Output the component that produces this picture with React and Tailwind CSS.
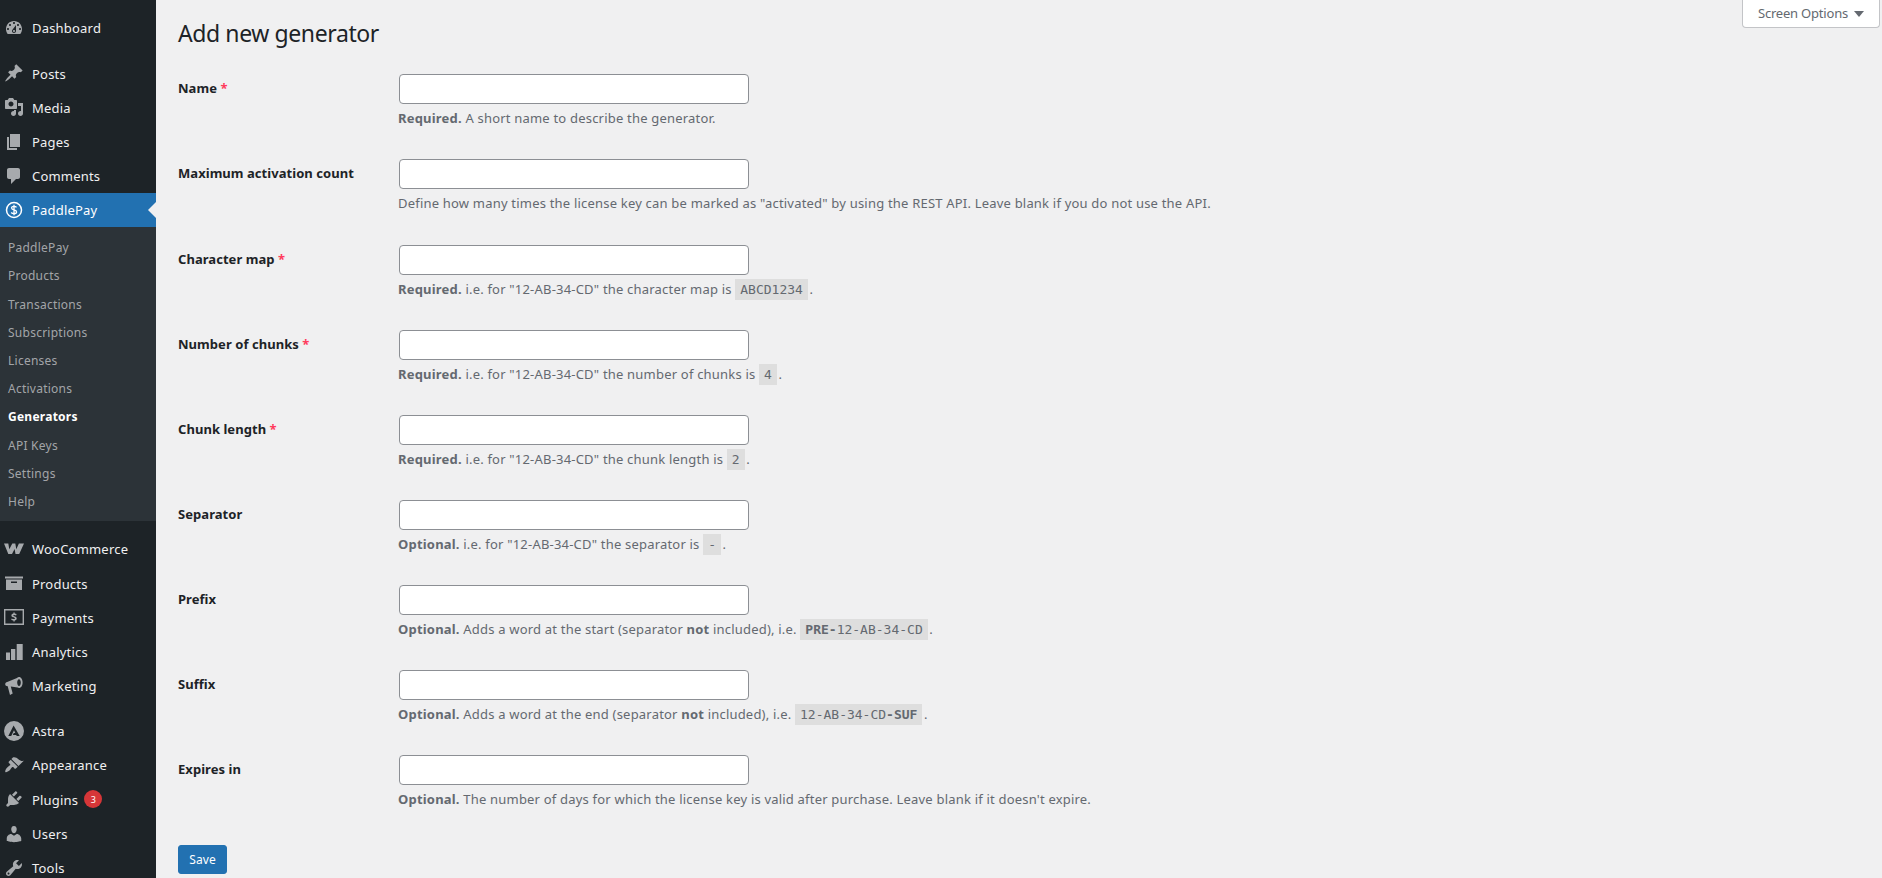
import React from 'react';

const FONT = "font-['Noto_Sans',sans-serif]";

// Dashicons-style glyphs, all on a 20x20 box
const Icon = ({ children }) => (
  <svg viewBox="0 0 20 20" className="w-5 h-5 shrink-0 fill-[#a7aaad]" fillRule="evenodd">
    {children}
  </svg>
);

const icons = {
  dashboard: <path d="M3.76 16h12.48c1.1-1.37 1.76-3.11 1.76-5 0-4.42-3.58-8-8-8s-8 3.58-8 8c0 1.89.66 3.63 1.76 5zM10 4c.55 0 1 .45 1 1s-.45 1-1 1-1-.45-1-1 .45-1 1-1zM6 6c.55 0 1 .45 1 1s-.45 1-1 1-1-.45-1-1 .45-1 1-1zm8 0c.55 0 1 .45 1 1s-.45 1-1 1-1-.45-1-1 .45-1 1-1zm-5.37 5.55L12 7v6c0 1.1-.9 2-2 2s-2-.9-2-2c0-.57.24-1.08.63-1.45zM4 10c.55 0 1 .45 1 1s-.45 1-1 1-1-.45-1-1 .45-1 1-1zm12 0c.55 0 1 .45 1 1s-.45 1-1 1-1-.45-1-1 .45-1 1-1zm-5 3c0-.55-.45-1-1-1s-1 .45-1 1 .45 1 1 1 1-.45 1-1z" />,
  posts: <path d="M10.44 3.02l1.82-1.82 6.36 6.35-1.83 1.82c-1.05-.68-2.48-.57-3.41.36l-.75.75c-.92.93-1.04 2.35-.35 3.41l-1.83 1.82-2.41-2.41-2.8 2.79c-.42.42-3.38 2.71-3.8 2.29s1.86-3.39 2.28-3.81l2.79-2.79L4.1 9.36l1.83-1.82c1.05.69 2.48.57 3.4-.36l.75-.75c.93-.92 1.05-2.35.36-3.41z" />,
  media: <path d="M13 11V4c0-.55-.45-1-1-1h-1.67L9 1H5L3.67 3H2c-.55 0-1 .45-1 1v7c0 .55.45 1 1 1h10c.55 0 1-.45 1-1zM7 4.5c1.38 0 2.5 1.12 2.5 2.5S8.38 9.5 7 9.5 4.5 8.38 4.5 7 5.62 4.5 7 4.5zM14 6h5v10.5c0 1.38-1.12 2.5-2.5 2.5S14 17.88 14 16.5s1.12-2.5 2.5-2.5c.17 0 .34.02.5.05V9h-3V6zm-4 8.05V13h2v3.5c0 1.38-1.12 2.5-2.5 2.5S7 17.88 7 16.5 8.12 14 9.5 14c.17 0 .34.02.5.05z" />,
  pages: <path d="M6 15V2h10v13H6zm-1 1h8v2H3V5h2v11z" />,
  comments: <path d="M5 2h9c1.1 0 2 .9 2 2v7c0 1.1-.9 2-2 2h-2l-5 5v-5H5c-1.1 0-2-.9-2-2V4c0-1.1.9-2 2-2z" />,
  woo: <path d="M0 4.500h4.300l1 5.800 3-5.800h3l1 5.800 2.600-5.800H20l-4.800 10.500h-3.700l-.9-5-2.600 5H4.300z" />,
  products: <path d="M1 3.500h18v2H1zM2 6.500h16V17H2zM7 8.500V10h6V8.500z" />,
  payments: <path d="M0 2h20v16H0zM1.400 3.400v13.200h17.200V3.400zM10.700 5.400v1c.8.1 1.400.3 1.900.6l-.5 1.400c-.6-.3-1.300-.5-2-.5-.6 0-.9.2-.9.6 0 .9 3.500.6 3.500 2.900 0 1-.7 1.800-2 2v1.100H9.400v-1c-.9-.1-1.700-.3-2.200-.7l.5-1.400c.6.4 1.500.6 2.200.6.7 0 1-.2 1-.6 0-.9-3.500-.6-3.500-2.800 0-1 .7-1.800 2-2v-1z" />,
  analytics: <g><rect x="2" y="10.500" width="4" height="7.500" /><rect x="7" y="7" width="4.300" height="11" /><rect x="12.700" y="2" width="6" height="16" /></g>,
  marketing: <path d="M15 1c2.200 0 3.600 2.500 3.600 5.500S17.200 12 15 12c-.5 0-1-.1-1.400-.4L6.800 10.600 8.700 17.600 6 19 3.700 10.300C2.200 10 1.200 9.400 1.200 8.200c0-1 .8-1.700 2-2.100L13 1.900c.6-.4 1.300-.9 2-.9zM15 3.200c-1 0-1.800 1.500-1.800 3.300S14 10 15 10s1.800-1.700 1.800-3.500S16 3.200 15 3.200z" />,
  astra: <path d="M10 0a10 10 0 1 1 0 20 10 10 0 0 1 0-20zM9.600 4.500 4.300 15h2.900l2.800-5.800 1.300 2.800H9.800l-1 2h3.400l.5 1h3z" />,
  appearance: <path d="M14.480 11.060 7.410 3.990l1.500-1.500c.5-.56 2.300-.47 3.510.32 1.210.8 1.430 1.280 2.910 2.100 1.180.64 2.450 1.260 4.450.85zM13.770 11.770 6.700 4.700 4.930 6.470c-.39.39-.39 1.020 0 1.410l1.060 1.060c.39.39.39 1.030 0 1.420-.6.6-1.430 1.110-2.210 1.690-.35.26-.7.53-1.010.84-1.100 1.100-2 3.500-1.400 4.100.6.6 3-.3 4.100-1.400.31-.31.58-.66.84-1.010.58-.78 1.090-1.610 1.690-2.210.39-.39 1.030-.39 1.420 0l1.060 1.060c.39.39 1.020.39 1.410 0z" />,
  plugins: <path d="M13.110 4.360 9.870 7.600 8 5.730l3.240-3.240c.35-.34 1.050-.2 1.560.32.52.51.66 1.210.31 1.550zm-8 1.770.91-1.120 9.010 9.010-1.190.84c-.71.71-2.630 1.160-3.820 1.160H6.140L4.900 17.260c-.59.59-1.540.59-2.120 0-.59-.58-.59-1.530 0-2.120l1.240-1.240v-3.880c0-1.130.4-3.190 1.090-3.890zm7.260 3.970 3.240-3.240c.34-.35 1.040-.21 1.550.31.52.51.66 1.210.31 1.550l-3.240 3.250z" />,
  users: <path d="M10 9.250c-2.270 0-2.730-3.440-2.730-3.440C7 4.020 7.820 2 9.970 2c2.160 0 2.980 2.020 2.710 3.810 0 0-.41 3.440-2.680 3.440zm0 2.570L12.720 10c2.390 0 4.520 2.330 4.520 4.530v2.490s-3.650 1.130-7.240 1.130c-3.650 0-7.240-1.130-7.240-1.130v-2.490c0-2.250 1.940-4.480 4.470-4.480z" />,
  tools: <path d="M16.680 9.770c-1.340 1.340-3.300 1.670-4.950.99l-5.410 6.520c-.99.99-2.590.99-3.580 0s-.99-2.590 0-3.570l6.520-5.420c-.68-1.650-.35-3.610.99-4.950 1.280-1.280 3.120-1.620 4.720-1.060l-2.890 2.890 2.820 2.820 2.860-2.870c.53 1.580.18 3.390-1.080 4.650zM3.810 16.210c.4.39 1.040.39 1.430 0 .4-.4.4-1.040 0-1.430-.39-.4-1.030-.4-1.430 0-.39.39-.39 1.030 0 1.430z" />,
};

const MenuItem = ({ icon, label, badge }) => (
  <div className="flex items-center h-[34.2px] pl-1 text-[13px] text-[#f0f0f1]">
    <Icon>{icons[icon]}</Icon>
    <span className="ml-2 mt-[2px] tracking-[0.2px]">{label}</span>
    {badge && (
      <span className="ml-[6px] w-[18px] h-[18px] rounded-full bg-[#d63638] text-white text-[9px] flex items-center justify-center">{badge}</span>
    )}
  </div>
);

const subItems = ['PaddlePay', 'Products', 'Transactions', 'Subscriptions', 'Licenses', 'Activations', 'Generators', 'API Keys', 'Settings', 'Help'];

const Sidebar = () => (
  <div className="w-[156px] shrink-0 bg-[#1d2327] pt-[11px] h-full overflow-hidden">
    <MenuItem icon="dashboard" label="Dashboard" />
    <div className="h-[11px]" />
    <MenuItem icon="posts" label="Posts" />
    <MenuItem icon="media" label="Media" />
    <MenuItem icon="pages" label="Pages" />
    <MenuItem icon="comments" label="Comments" />
    {/* active plugin entry */}
    <div className="relative flex items-center h-[34.2px] pl-1 bg-[#2271b1] text-[13px] text-white">
      <svg viewBox="0 0 20 20" className="w-5 h-5 shrink-0">
        <circle cx="10" cy="10" r="7.500" fill="none" stroke="#fff" strokeWidth="1.500" />
        <path d="M12.500 7.300C12 6.600 11 6.300 10 6.300c-1.400 0-2.400.7-2.400 1.800 0 2.500 5 1.300 5 3.800 0 1.100-1.100 1.800-2.600 1.800-1.100 0-2.200-.4-2.800-1.200M10 4.800v10.400" fill="none" stroke="#fff" strokeWidth="1.300" />
      </svg>
      <span className="ml-2 mt-[2px] tracking-[0.2px]">PaddlePay</span>
      <div className="absolute right-0 top-1/2 -mt-2 border-y-8 border-r-8 border-y-transparent border-r-[#f0f0f1]" />
    </div>
    <div className="bg-[#2c3338] pt-[7px] pb-[5px]">
      {subItems.map((item) => (
        <div
          key={item}
          className={`h-[28.200px] flex items-center pl-2 text-[12px] tracking-[0.25px] ${item === 'Generators' ? 'font-bold text-white' : 'text-[#c3c4c7]/80'}`}
        >
          {item}
        </div>
      ))}
    </div>
    <div className="h-[11px]" />
    <MenuItem icon="woo" label="WooCommerce" />
    <MenuItem icon="products" label="Products" />
    <MenuItem icon="payments" label="Payments" />
    <MenuItem icon="analytics" label="Analytics" />
    <MenuItem icon="marketing" label="Marketing" />
    <div className="h-[11px]" />
    <MenuItem icon="astra" label="Astra" />
    <MenuItem icon="appearance" label="Appearance" />
    <MenuItem icon="plugins" label="Plugins" badge="3" />
    <MenuItem icon="users" label="Users" />
    <MenuItem icon="tools" label="Tools" />
  </div>
);

const Code = ({ children }) => (
  <code className="font-['DejaVu_Sans_Mono',monospace] text-[13px] bg-[#dedede] px-[5px] py-[3px] -mr-[2px] tracking-normal">{children}</code>
);

const B = ({ children }) => <strong className="font-bold">{children}</strong>;

const fields = [
  { label: 'Name', req: true, desc: <><B>Required.</B> A short name to describe the generator.</> },
  { label: 'Maximum activation count', desc: <>Define how many times the license key can be marked as "activated" by using the REST API. Leave blank if you do not use the API.</> },
  { label: 'Character map', req: true, desc: <><B>Required.</B> i.e. for "12-AB-34-CD" the character map is <Code>ABCD1234</Code> .</> },
  { label: 'Number of chunks', req: true, desc: <><B>Required.</B> i.e. for "12-AB-34-CD" the number of chunks is <Code>4</Code> .</> },
  { label: 'Chunk length', req: true, desc: <><B>Required.</B> i.e. for "12-AB-34-CD" the chunk length is <Code>2</Code> .</> },
  { label: 'Separator', desc: <><B>Optional.</B> i.e. for "12-AB-34-CD" the separator is <Code>-</Code> .</> },
  { label: 'Prefix', desc: <><B>Optional.</B> Adds a word at the start (separator <B>not</B> included), i.e. <Code><B>PRE-</B>12-AB-34-CD</Code> .</> },
  { label: 'Suffix', desc: <><B>Optional.</B> Adds a word at the end (separator <B>not</B> included), i.e. <Code>12-AB-34-CD<B>-SUF</B></Code> .</> },
  { label: 'Expires in', desc: <><B>Optional.</B> The number of days for which the license key is valid after purchase. Leave blank if it doesn't expire.</> },
];

const Field = ({ field }) => (
  <div className="flex py-[15px] h-[85.100px]">
    <div className="w-[220px] shrink-0 pt-[5px] text-[13px] leading-[18px] font-bold text-[#1d2327] tracking-[0.05px]">
      {field.label}
      {field.req && <span className="text-[#ff3b5c]"> *</span>}
    </div>
    <div className="flex-1">
      <input type="text" className="block w-[350px] h-[30px] bg-white border border-[#8c8f94] rounded-[4px] ml-px" />
      <p className="mt-[5px] text-[13px] leading-[18px] text-[#646970] whitespace-nowrap tracking-[0.2px]">{field.desc}</p>
    </div>
  </div>
);

export default function App() {
  return (
    <div className={`flex w-[1882px] h-[878px] overflow-hidden bg-[#f0f0f1] ${FONT}`}>
      <Sidebar />
      <div className="relative flex-1 pl-[22px]">
        <div className="absolute top-0 right-[2px] w-[138px] h-[28px] bg-white border border-t-0 border-[#c3c4c7] rounded-b-[4px] flex items-center justify-center gap-[6px] text-[13px] text-[#646970] tracking-[-0.2px]">
          Screen Options
          <span className="border-x-[5px] border-t-[6px] border-x-transparent border-t-[#646970]" />
        </div>
        <h1 className="text-[23px] leading-[29px] pt-[19px] font-normal text-[#1d2327] tracking-[-0.4px]">Add new generator</h1>
        <div className="mt-[11.400px]">
          {fields.map((field) => <Field key={field.label} field={field} />)}
        </div>
        <button className="mt-[20px] w-[49px] h-[29px] bg-[#2271b1] border border-[#2271b1] rounded-[3px] text-white text-[12px] tracking-[0.1px]">Save</button>
      </div>
    </div>
  );
}
